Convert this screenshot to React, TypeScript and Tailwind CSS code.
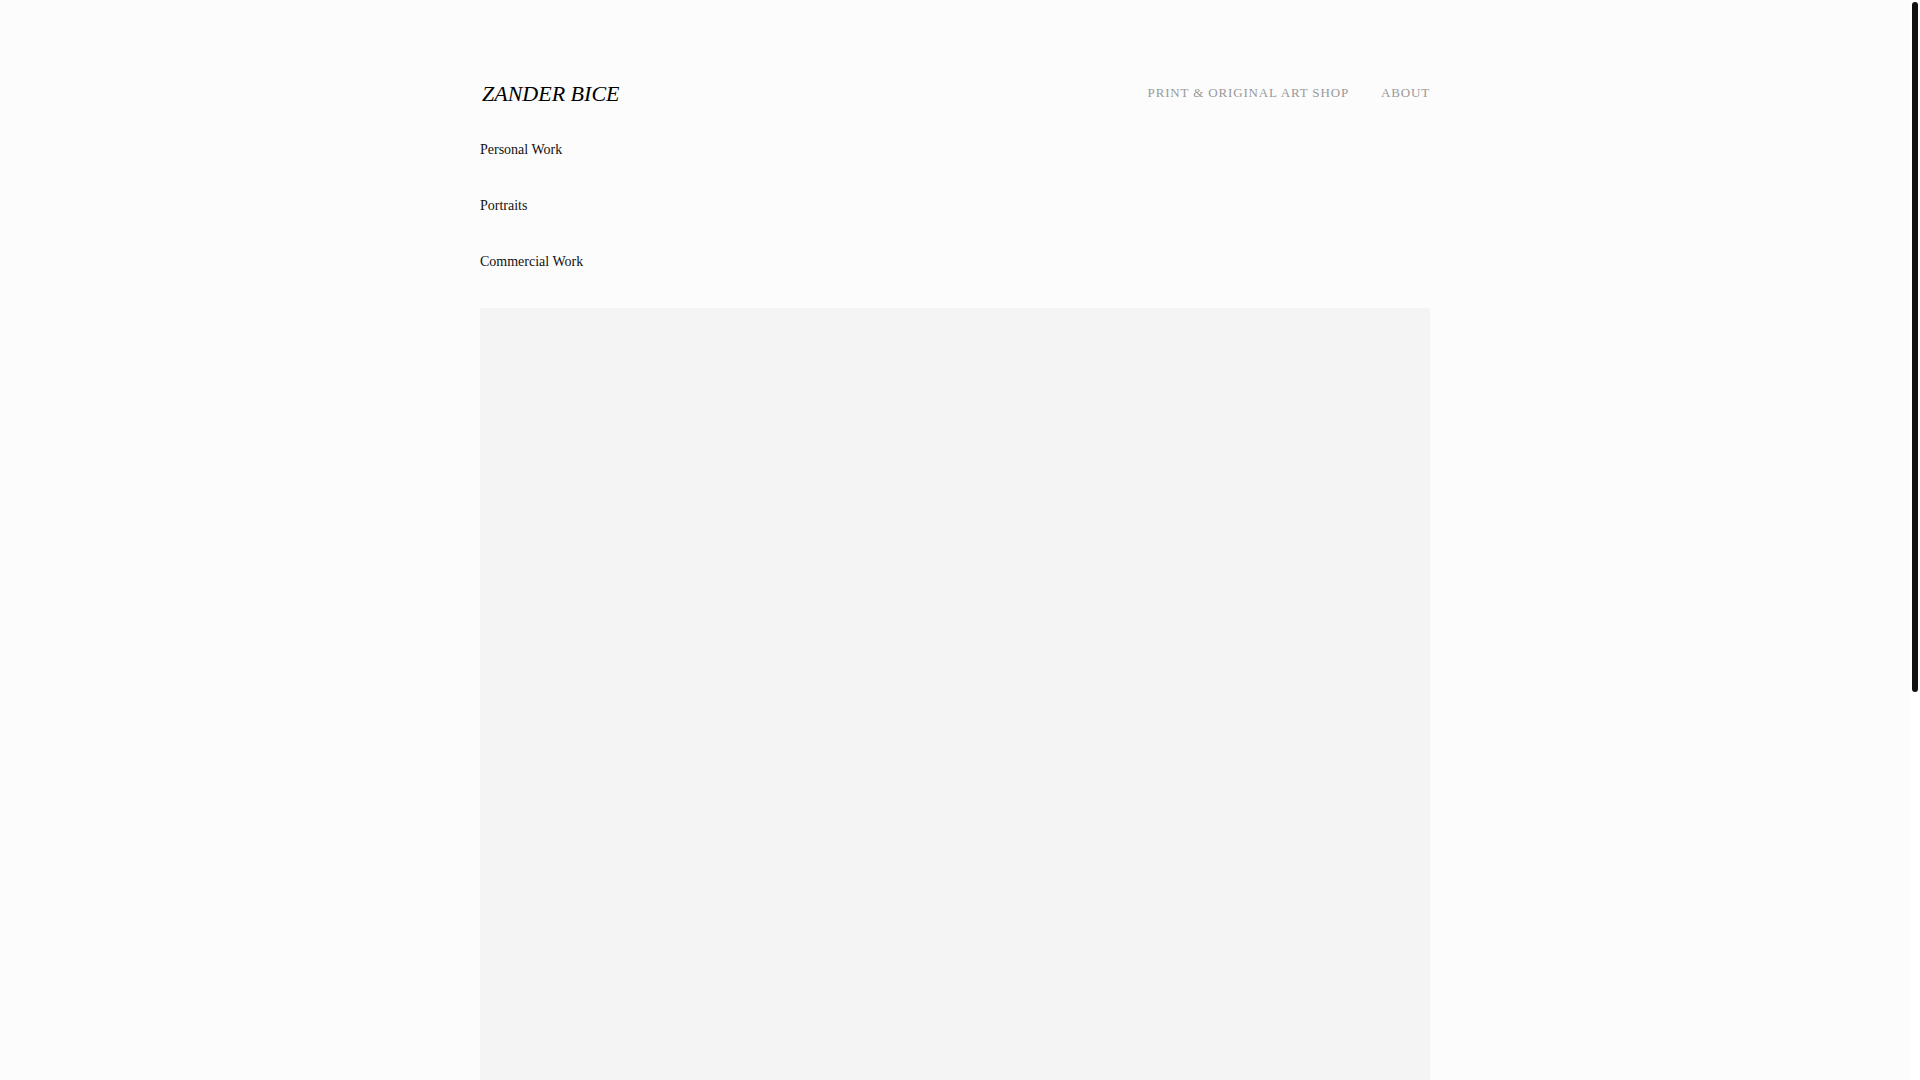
const navLinks = ["Print & Original Art Shop", "About"];
const galleries = ["Personal Work", "Portraits", "Commercial Work"];

function Header() {
  return (
    <header className="flex items-center justify-between">
      <a href="#" className="pt-0.5 pl-0.5 text-[22px] leading-8 text-black italic">
        ZANDER BICE
      </a>
      <nav className="flex gap-8">
        {navLinks.map((label) => (
          <a key={label} href="#" className="text-[13px] leading-6 tracking-[0.065em] text-[#999999] uppercase">
            {label}
          </a>
        ))}
      </nav>
    </header>
  );
}

function GalleryList() {
  return (
    <ul className="mt-7 flex flex-col gap-8">
      {galleries.map((title) => (
        <li key={title} className="text-sm leading-6">
          <a href="#">{title}</a>
        </li>
      ))}
    </ul>
  );
}

// slim dark scroll indicator on the right edge
function ScrollThumb() {
  return (
    <div className="fixed inset-y-0 right-0 w-2.5 bg-white p-0.5 pb-0">
      <div className="h-[64%] w-1.5 rounded-full bg-[#111111]" />
    </div>
  );
}

export default function App() {
  return (
    <div className="flex min-h-screen flex-col bg-[#fcfcfc] pr-2.5 font-['Liberation_Serif',serif] text-[#111111]">
      <main className="mx-auto flex w-full max-w-[950px] grow flex-col pt-[76px]">
        <Header />
        <GalleryList />
        <div className="mt-[34px] grow bg-[#f4f4f4]" />
      </main>
      <ScrollThumb />
    </div>
  );
}
